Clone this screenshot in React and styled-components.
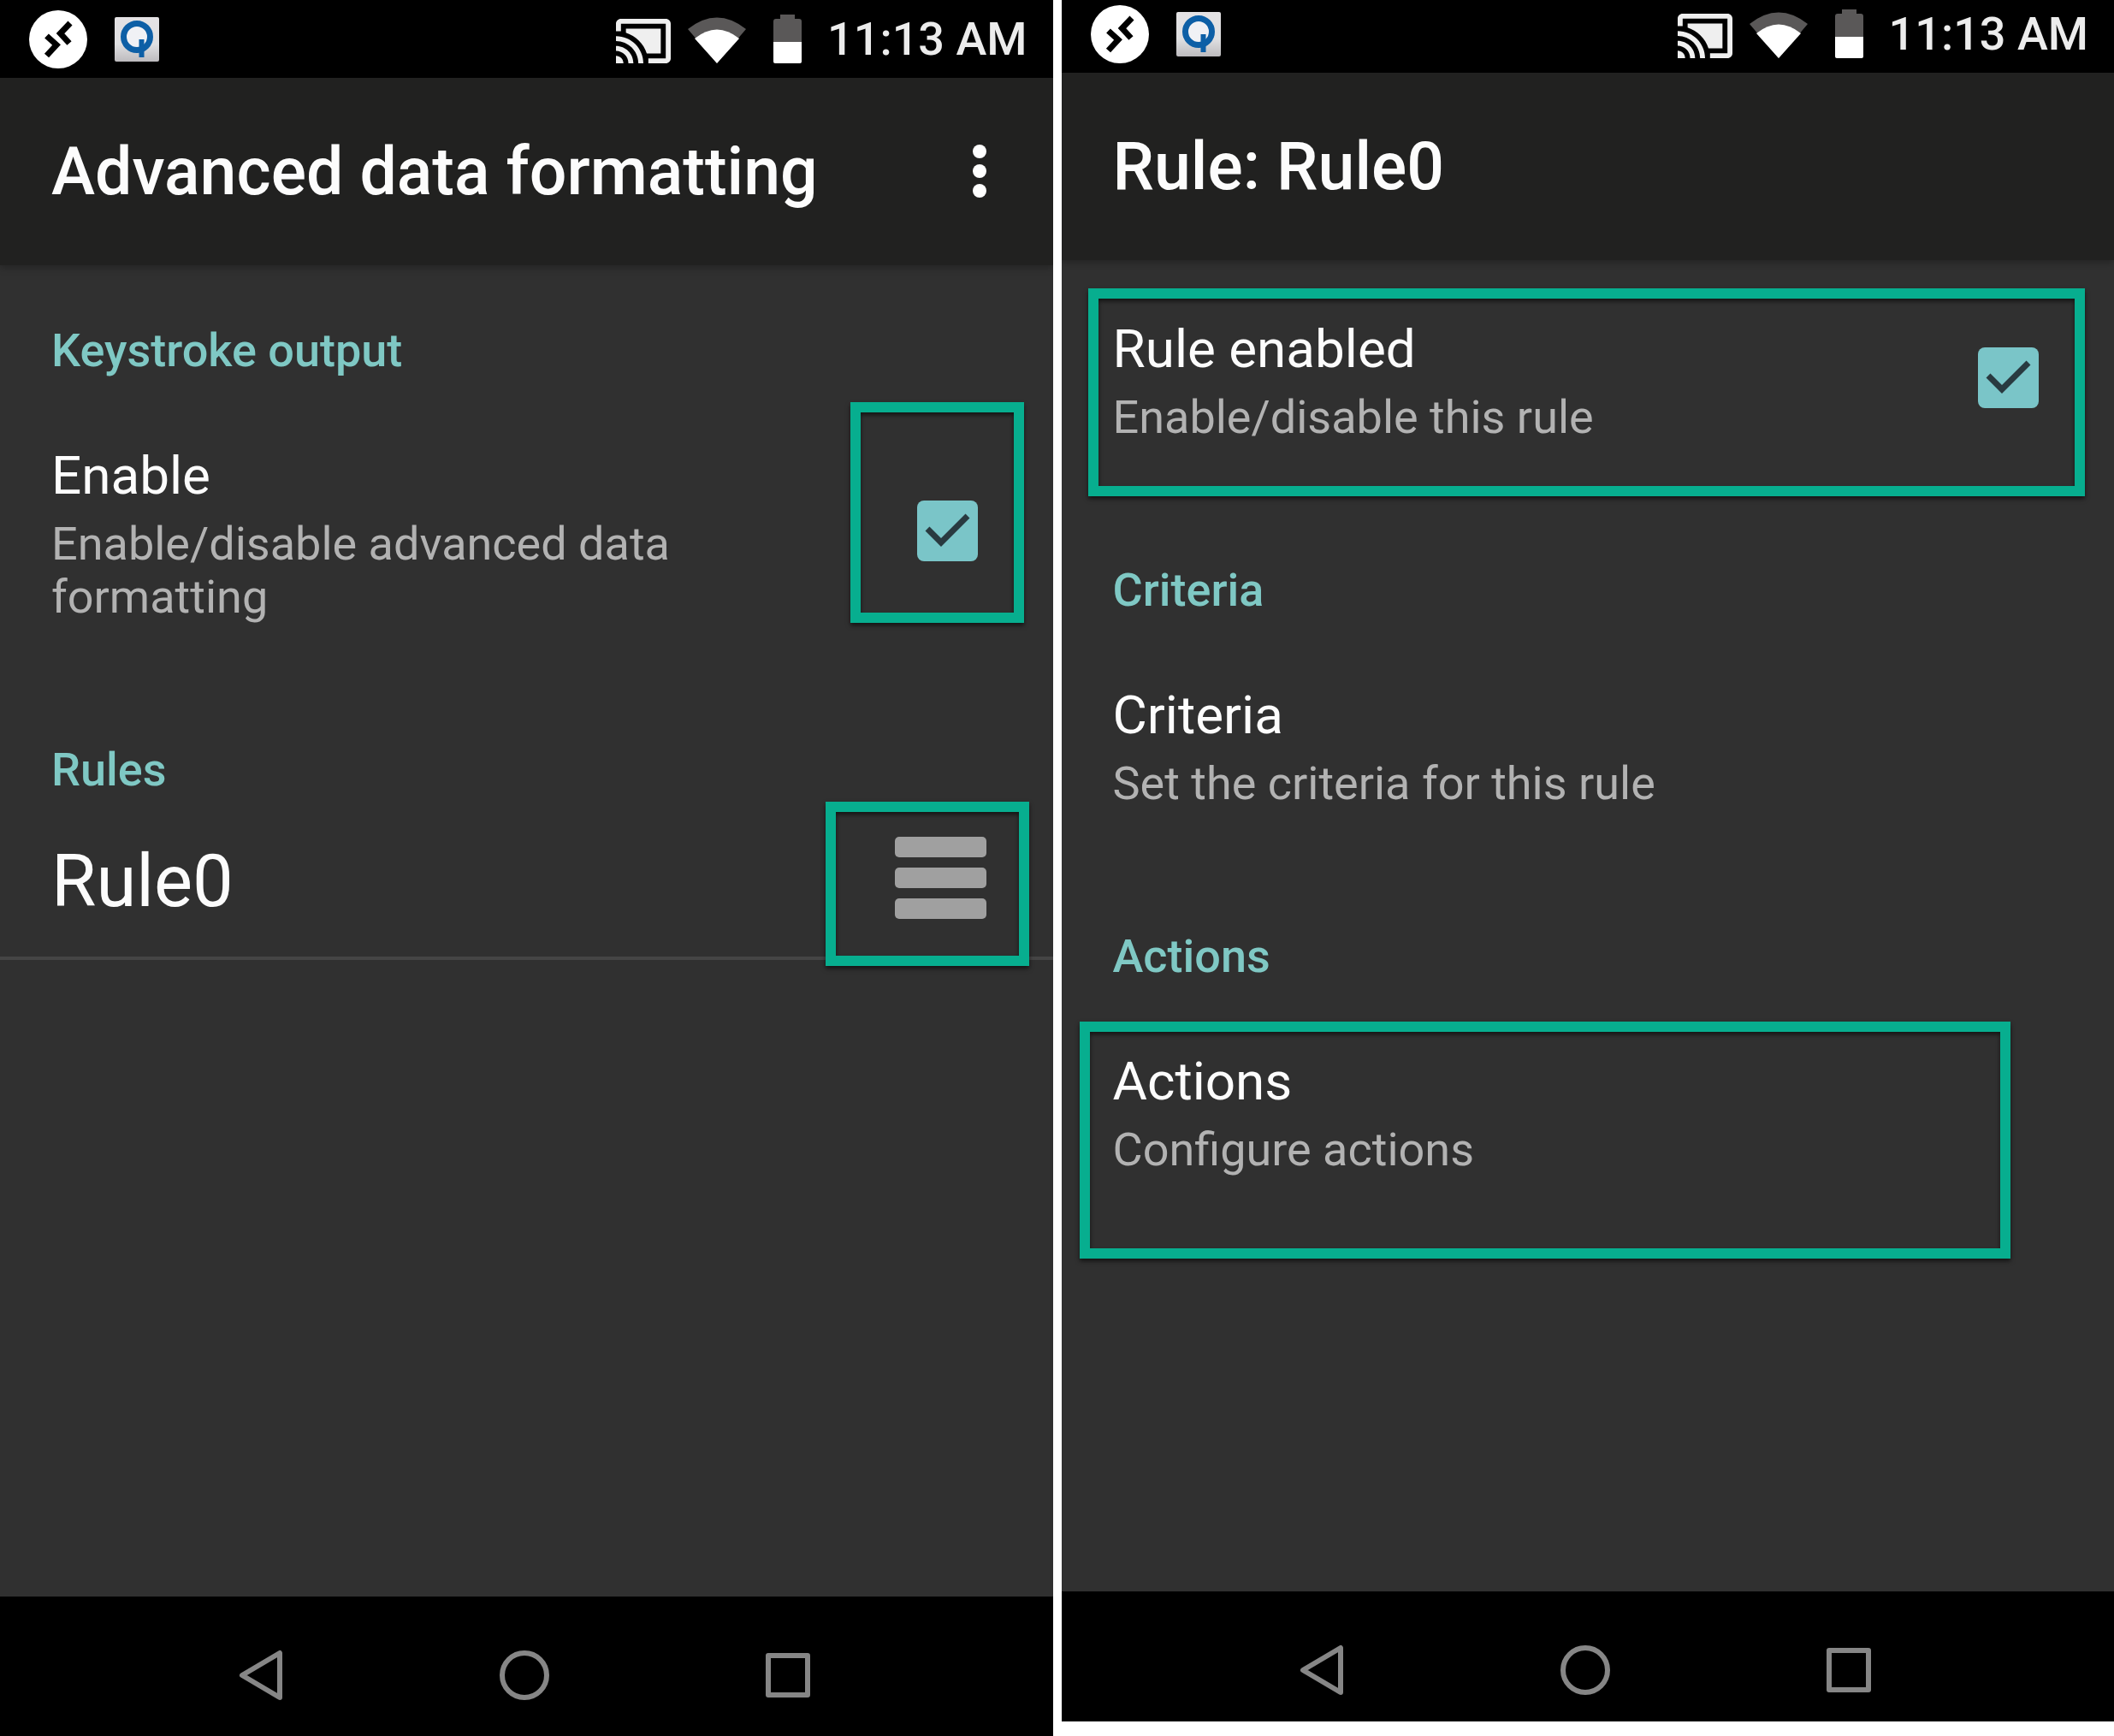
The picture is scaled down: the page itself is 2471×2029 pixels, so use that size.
import React from "react";
import styled, { createGlobalStyle } from "styled-components";

const color = {
  bar: "#212120",
  surface: "#303030",
  accent: "#7fc8c4",
  check: "#7ac5c8",
  text: "#fcfcfc",
  muted: "#b2b2b2",
  outline: "#07ae8f",
  nav: "#868686",
};

const GlobalStyle = createGlobalStyle`
  * { box-sizing: border-box; }
  body {
    margin: 0;
    background: #fff;
    font-family: Roboto, "Liberation Sans", sans-serif;
  }
  h1, h2, p { margin: 0; }
`;

const Page = styled.div`
  display: grid;
  grid-template-columns: 1fr 1fr;
  gap: 10px;
  min-height: 100vh;
`;

const Screen = styled.section`
  display: flex;
  flex-direction: column;
  overflow: hidden;
  background: ${color.surface};
  color: ${color.text};
  margin-bottom: ${(p) => (p.$cropped ? 17 : 0)}px;
`;

const StatusBar = styled.div`
  display: flex;
  flex: none;
  align-items: center;
  height: 91px;
  margin-top: ${(p) => (p.$cropped ? -6 : 0)}px;
  padding: 0 30px 0 34px;
  background: #000;
`;

const Notifications = styled.div`
  display: flex;
  flex: 1;
  align-items: center;
  gap: 32px;
`;

const SystemIcons = styled.div`
  display: flex;
  align-items: flex-end;
  gap: 20px;
`;

const Battery = styled.svg`
  margin: 0 30px 0 12px;
`;

const Clock = styled.time`
  font-size: 54px;
  line-height: 62px;
  font-weight: 500;
  color: #ececec;
`;

const AppBar = styled.header`
  position: relative;
  display: flex;
  flex: none;
  align-items: center;
  justify-content: space-between;
  height: 219px;
  padding: 0 54px 0 60px;
  background: ${color.bar};
  box-shadow: 0 3px 8px rgba(0, 0, 0, 0.25);
`;

const ScreenTitle = styled.h1`
  font-size: 77px;
  line-height: 96px;
  font-weight: 500;
`;

const IconButton = styled.button`
  display: flex;
  flex: none;
  align-items: center;
  justify-content: center;
  padding: 0;
  border: 0;
  background: none;
  color: inherit;
`;

const Content = styled.main`
  flex: 1;
  padding-top: 21px;
`;

const SectionTitle = styled.h2`
  padding: 48px 60px 32px;
  font-size: 54px;
  line-height: 62px;
  font-weight: 500;
  color: ${color.accent};
`;

const Preference = styled.div`
  position: relative;
  display: flex;
  align-items: center;
  justify-content: space-between;
  gap: 96px;
  padding: 46px 88px 92px 60px;
`;

const PreferenceText = styled.label`
  display: flex;
  flex-direction: column;
  gap: 12px;
`;

const PreferenceLink = styled.a`
  display: flex;
  flex-direction: column;
  gap: 12px;
  color: inherit;
  text-decoration: none;
`;

const PreferenceTitle = styled.span`
  font-size: 62px;
  line-height: 74px;
`;

const Summary = styled.span`
  font-size: 54px;
  line-height: 62px;
  color: ${color.muted};
`;

const CheckCell = styled.div`
  display: grid;
  flex: none;
  padding-bottom: 8px;

  > * {
    grid-area: 1 / 1;
  }

  svg {
    pointer-events: none;
  }
`;

const CheckInput = styled.input`
  appearance: none;
  width: 71px;
  height: 71px;
  margin: 0;
  border-radius: 8px;
  background: ${color.check};
`;

const RuleRow = styled.div`
  position: relative;
  display: flex;
  align-items: flex-start;
  justify-content: space-between;
  padding: 15px 78px 36px 60px;
  border-bottom: 4px solid #454545;
`;

const RuleName = styled.span`
  font-size: 85px;
  line-height: 104px;
`;

const Highlight = styled.div`
  position: absolute;
  top: ${(p) => p.$top}px;
  left: ${(p) => (p.$left === undefined ? "auto" : `${p.$left}px`)};
  right: ${(p) => p.$right}px;
  width: ${(p) => (p.$width ? `${p.$width}px` : "auto")};
  height: ${(p) => p.$height}px;
  border: 12px solid ${color.outline};
  box-shadow: 0 3px 5px rgba(0, 0, 0, 0.6), inset 0 3px 5px rgba(0, 0, 0, 0.6);
  pointer-events: none;
`;

const NavBar = styled.nav`
  display: flex;
  flex: none;
  align-items: flex-start;
  height: ${(p) => (p.$cropped ? 152 : 163)}px;
  padding: 60px 156px 0 151px;
  background: #000;
  color: ${color.nav};
`;

const NavButton = styled(IconButton)`
  flex: 1;
`;

function RemoteDesktopIcon() {
  return (
    <svg width="68" height="68" viewBox="0 0 68 68" aria-hidden="true">
      <circle cx="34" cy="34" r="34" fill="#fff" />
      <g fill="none" stroke="#000" strokeWidth="7">
        <path d="M20.500 30L32 40.500L20.500 53" />
        <path d="M48 15L36.500 27L47 38.500" />
      </g>
    </svg>
  );
}

function ScannerIcon() {
  return (
    <svg width="52" height="52" viewBox="0 0 52 52" aria-hidden="true">
      <defs>
        <linearGradient id="tile" x1="0" y1="0" x2="0" y2="1">
          <stop offset="0" stopColor="#e4e2e4" />
          <stop offset="0.6" stopColor="#e0e0e2" />
          <stop offset="1" stopColor="#bdbbbe" />
        </linearGradient>
      </defs>
      <rect width="52" height="52" rx="2" fill="url(#tile)" />
      <circle cx="26" cy="23" r="15.500" fill="#f0f1f5" stroke="#0d5fa6" strokeWidth="7" />
      <path d="M31.500 26V47" stroke="#0d5fa6" strokeWidth="6" />
    </svg>
  );
}

function CastIcon() {
  return (
    <svg width="64" height="52" viewBox="1 3 22 18" preserveAspectRatio="none" fill="#efefef" aria-hidden="true">
      <path d="M1 18v3h3c0-1.660-1.340-3-3-3zm0-4v2c2.760 0 5 2.240 5 5h2c0-3.870-3.130-7-7-7zm18-7H5v1.630c3.960 1.280 7.090 4.410 8.370 8.370H19V7zM1 10v2c4.970 0 9 4.030 9 9h2c0-6.080-4.930-11-11-11zm20-7H3c-1.100 0-2 .9-2 2v3h2V5h18v14h-7v2h7c1.100 0 2-.9 2-2V5c0-1.100-.9-2-2-2z" />
    </svg>
  );
}

function WifiIcon() {
  return (
    <svg width="68" height="54" viewBox="0 0 68 54" aria-hidden="true">
      <path d="M0 14Q34 -13 68 14L34 54Z" fill="#5a5858" />
      <path d="M8 25Q34 4 60 25L34 54Z" fill="#fff" />
    </svg>
  );
}

function BatteryIcon() {
  return (
    <Battery width="33" height="57" viewBox="0 0 33 57" aria-hidden="true">
      <path d="M8 0H25V5H30Q33 5 33 8V32H0V8Q0 5 3 5H8Z" fill="#5a5858" />
      <path d="M0 32H33V55Q33 57 31 57H2Q0 57 0 55Z" fill="#fff" />
    </Battery>
  );
}

function OverflowIcon() {
  return (
    <svg width="64" height="64" viewBox="0 0 64 64" fill="#fff" aria-hidden="true">
      <circle cx="32" cy="8" r="8" />
      <circle cx="32" cy="31" r="8" />
      <circle cx="32" cy="54" r="8" />
    </svg>
  );
}

function ReorderIcon() {
  return (
    <svg width="107" height="96" viewBox="0 0 107 96" fill="#a0a0a0" aria-hidden="true">
      <rect y="0" width="107" height="24" rx="5" />
      <rect y="36" width="107" height="24" rx="5" />
      <rect y="72" width="107" height="24" rx="5" />
    </svg>
  );
}

function NavIcon({ children }) {
  return (
    <svg
      width="64"
      height="64"
      viewBox="0 0 64 64"
      fill="none"
      stroke="currentColor"
      strokeWidth="6"
      strokeLinejoin="round"
      aria-hidden="true"
    >
      {children}
    </svg>
  );
}

function Status({ cropped }) {
  return (
    <StatusBar $cropped={cropped}>
      <Notifications>
        <RemoteDesktopIcon />
        <ScannerIcon />
      </Notifications>
      <SystemIcons>
        <CastIcon />
        <WifiIcon />
        <BatteryIcon />
      </SystemIcons>
      <Clock>11:13 AM</Clock>
    </StatusBar>
  );
}

function Navigation({ cropped }) {
  return (
    <NavBar $cropped={cropped}>
      <NavButton type="button" aria-label="Back">
        <NavIcon>
          <path d="M54 6V58L10 32Z" />
        </NavIcon>
      </NavButton>
      <NavButton type="button" aria-label="Home">
        <NavIcon>
          <circle cx="32" cy="32" r="26" />
        </NavIcon>
      </NavButton>
      <NavButton type="button" aria-label="Recent apps">
        <NavIcon>
          <rect x="9" y="9" width="46" height="46" />
        </NavIcon>
      </NavButton>
    </NavBar>
  );
}

function CheckPreference({ id, title, summary, children }) {
  return (
    <Preference>
      <PreferenceText htmlFor={id}>
        <PreferenceTitle>{title}</PreferenceTitle>
        <Summary>{summary}</Summary>
      </PreferenceText>
      <CheckCell>
        <CheckInput id={id} type="checkbox" defaultChecked />
        <svg width="71" height="71" viewBox="0 0 71 71" aria-hidden="true">
          <path d="M12 33L28 49L59 18" fill="none" stroke="#293a40" strokeWidth="7" />
        </svg>
      </CheckCell>
      {children}
    </Preference>
  );
}

function LinkPreference({ title, summary, children }) {
  return (
    <Preference>
      <PreferenceLink href="#">
        <PreferenceTitle>{title}</PreferenceTitle>
        <Summary>{summary}</Summary>
      </PreferenceLink>
      {children}
    </Preference>
  );
}

export default function App() {
  return (
    <>
      <GlobalStyle />
      <Page>
        <Screen>
          <Status />
          <AppBar>
            <ScreenTitle>Advanced data formatting</ScreenTitle>
            <IconButton type="button" aria-label="More options">
              <OverflowIcon />
            </IconButton>
          </AppBar>
          <Content>
            <SectionTitle>Keystroke output</SectionTitle>
            <CheckPreference
              id="enable"
              title="Enable"
              summary="Enable/disable advanced data formatting"
            >
              <Highlight $top={-3} $right={34} $width={203} $height={258} />
            </CheckPreference>
            <SectionTitle>Rules</SectionTitle>
            <RuleRow>
              <RuleName>Rule0</RuleName>
              <IconButton type="button" aria-label="Reorder Rule0">
                <ReorderIcon />
              </IconButton>
              <Highlight $top={-26} $right={28} $width={238} $height={192} />
            </RuleRow>
          </Content>
          <Navigation />
        </Screen>
        <Screen $cropped>
          <Status cropped />
          <AppBar>
            <ScreenTitle>Rule: Rule0</ScreenTitle>
          </AppBar>
          <Content>
            <CheckPreference
              id="rule-enabled"
              title="Rule enabled"
              summary="Enable/disable this rule"
            >
              <Highlight $top={12} $left={31} $right={34} $height={243} />
            </CheckPreference>
            <SectionTitle>Criteria</SectionTitle>
            <LinkPreference title="Criteria" summary="Set the criteria for this rule" />
            <SectionTitle>Actions</SectionTitle>
            <LinkPreference title="Actions" summary="Configure actions">
              <Highlight $top={13} $left={21} $right={121} $height={277} />
            </LinkPreference>
          </Content>
          <Navigation cropped />
        </Screen>
      </Page>
    </>
  );
}
